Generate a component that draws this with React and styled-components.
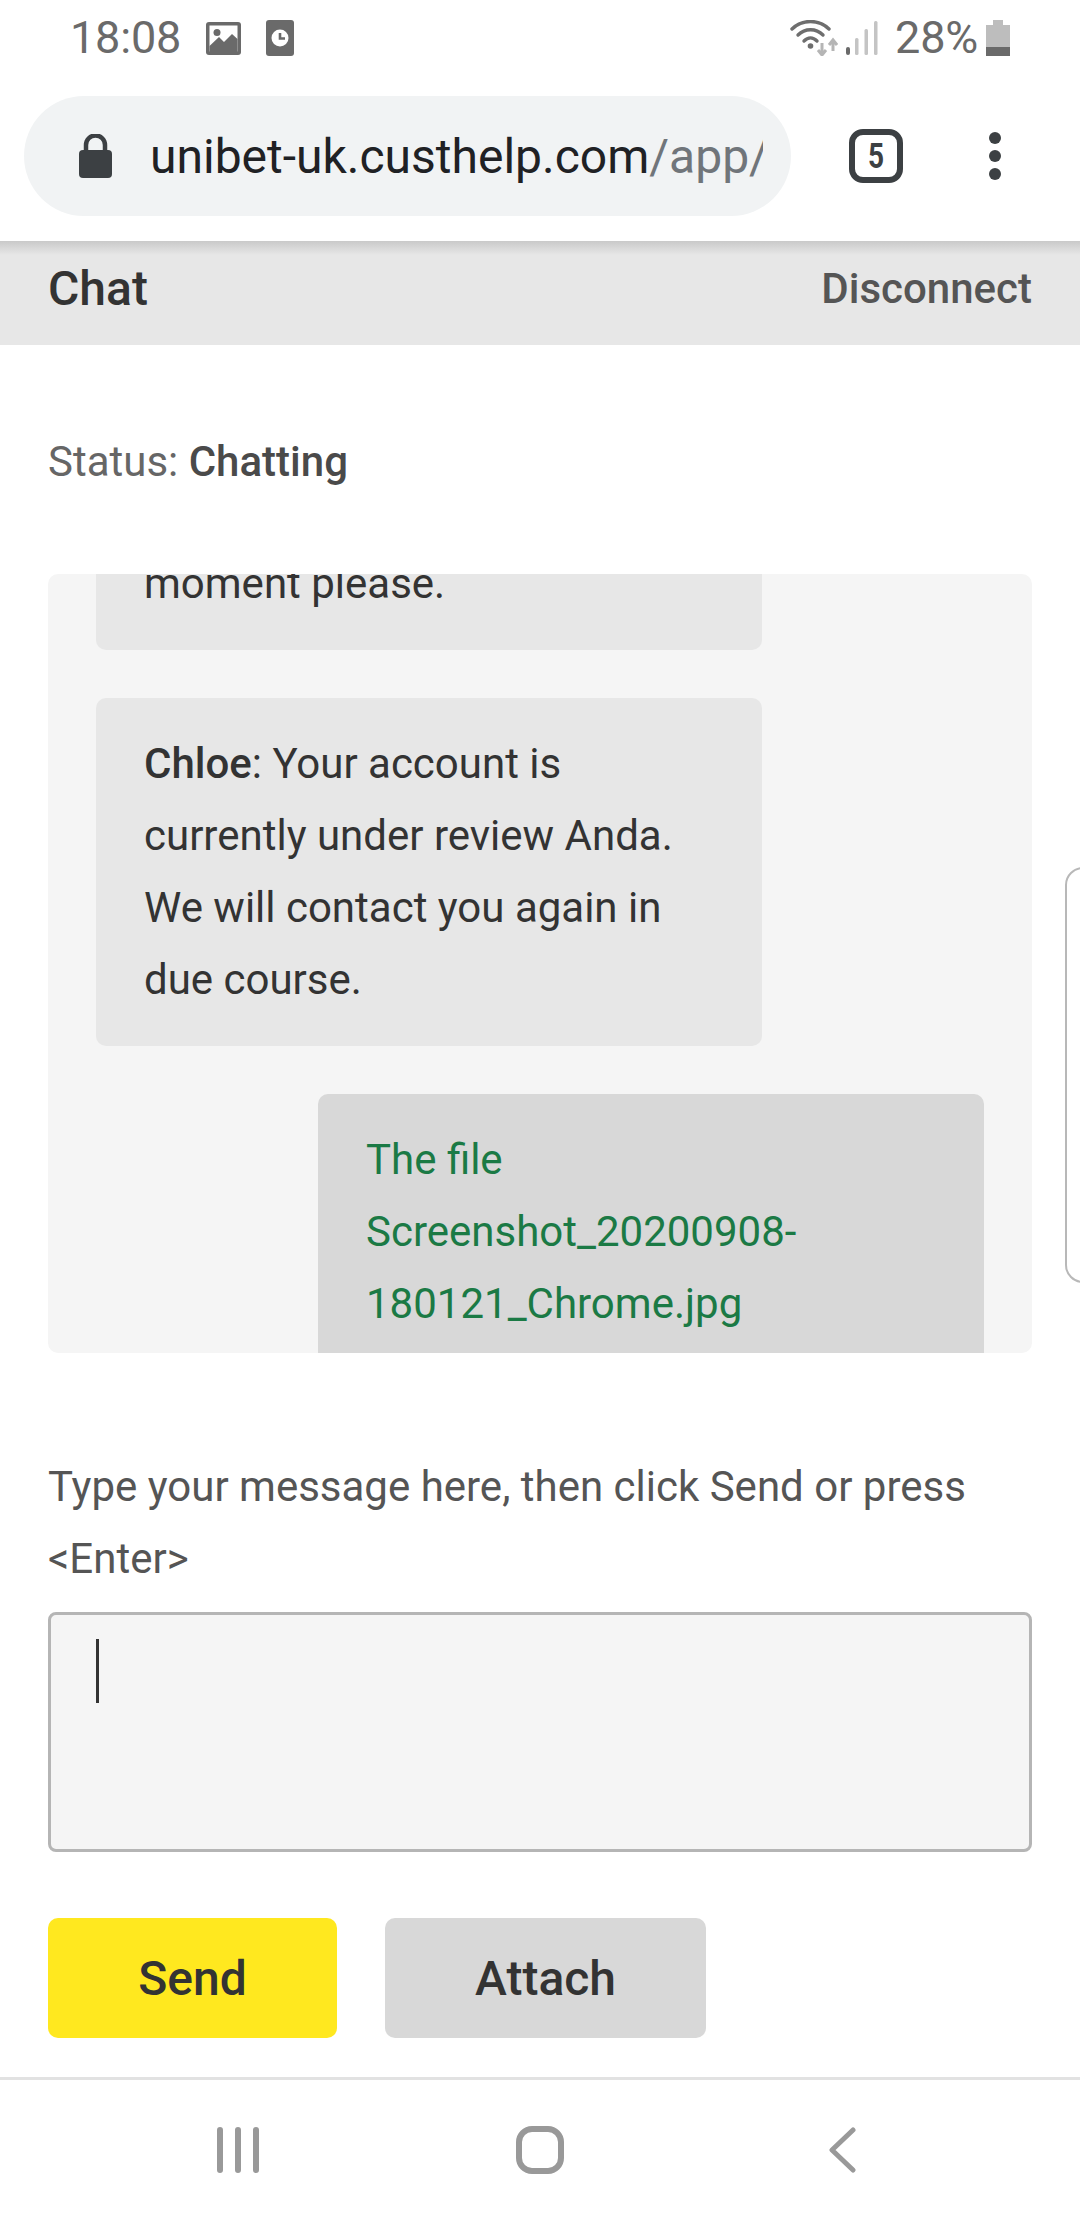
import React from "react";
import styled, { createGlobalStyle } from "styled-components";

const Global = createGlobalStyle`
  html, body { margin: 0; padding: 0; background: #fff; }
  body { font-family: Roboto, "Liberation Sans", sans-serif; }
  * { box-sizing: border-box; }
`;
const Page = styled.div`
  position: relative; width: 1080px; height: 2220px; background: #fff; overflow: hidden;
  display: flex; flex-direction: column;
`;
const StatusBar = styled.div`
  height: 76px; flex: none; display: flex; align-items: center; justify-content: space-between;
  padding: 0 70px 0 70px; color: #6a6a6a; font-size: 45px; letter-spacing: -0.2px;
`;
const StatusGroup = styled.div`display: flex; align-items: center; gap: ${p => p.$gap || 0}px;`;
const Clock = styled.span`margin-right: 25px; line-height: 76px;`;
const Percent = styled.span`margin: 0 8px 0 17px; line-height: 76px; font-size: 45px;`;
const SignalSlot = styled.div`margin-left: 8px; display: flex;`;
const Toolbar = styled.div`
  height: 165px; flex: none; display: flex; align-items: flex-start; padding: 20px 0 0 24px; background: #fff;
  position: relative; z-index: 1;
`;
const UrlPill = styled.div`
  width: 767px; height: 120px; border-radius: 60px; background: #f1f3f4;
  display: flex; align-items: center; padding: 0 28px 0 55px; overflow: hidden;
`;
const UrlText = styled.div`
  margin-left: 38px; font-size: 48px; color: #202124; white-space: nowrap; overflow: hidden; flex: 1; letter-spacing: 0;
  span { color: #70757a; }
`;
const TabCount = styled.div`
  margin: 33px 0 0 58px; width: 54px; height: 54px; border: 6px solid #3c4043; border-radius: 14px;
  display: flex; align-items: center; justify-content: center; font-size: 35px; font-weight: 700; color: #3c4043;
  span { display: block; transform: scaleX(0.8); }
`;
const MenuDots = styled.div`
  margin: 36px 0 0 86px; width: 12px; display: flex; flex-direction: column; gap: 6px;
  i { display: block; width: 12px; height: 12px; border-radius: 50%; background: #3c4043; }
`;
const Header = styled.div`
  height: 104px; flex: none; background: #e7e7e7; display: flex; align-items: center; justify-content: space-between;
  padding: 0 48px 10px; position: relative;
  &::before { content: ""; position: absolute; left: 0; right: 0; top: 0; height: 14px; background: linear-gradient(#c9c9c9, #e7e7e7); }
`;
const Title = styled.div`font-size: 48px; font-weight: 500; color: #333;`;
const Disconnect = styled.div`font-size: 42px; font-weight: 500; color: #555;`;
const Status = styled.div`
  margin: 88px 48px 0; height: 58px; line-height: 58px; font-size: 42px; color: #666; flex: none;
  b { font-weight: 500; color: #4a4a4a; }
`;
const ChatLog = styled.div`
  margin: 83px 48px 0; height: 779px; flex: none; background: #f5f5f5; border-radius: 10px; overflow: hidden;
  padding: 0 48px; display: flex; flex-direction: column; gap: 48px;
`;
const Bubble = styled.div`
  width: 666px; flex: none; padding: 30px 48px; border-radius: 10px; font-size: 42px; line-height: 72px;
  background: ${p => p.$own ? "#d8d8d8" : "#e7e7e7"};
  color: ${p => p.$own ? "#1b7a45" : "#333"};
  align-self: ${p => p.$own ? "flex-end" : "flex-start"};
  margin-top: ${p => p.$offset || 0}px;
  b { font-weight: 500; }
`;
const Prompt = styled.div`
  margin: 98px 48px 0; font-size: 42px; line-height: 72px; color: #555; flex: none;
`;
const MessageBox = styled.div`
  margin: 17px 48px 0; height: 240px; flex: none; background: #f5f5f5; border: 3px solid #b5b5b5; border-radius: 8px;
  padding: 24px 45px;
`;
const Caret = styled.div`width: 3px; height: 64px; background: #333;`;
const Actions = styled.div`margin: 66px 48px 0; display: flex; gap: 48px; flex: none;`;
const Button = styled.div`
  height: 120px; width: ${p => p.$w}px; border-radius: 10px; background: ${p => p.$bg};
  display: flex; align-items: center; justify-content: center; font-size: 48px; font-weight: 500; color: #333;
`;
const NavBar = styled.div`
  margin-top: 39px; flex: 1; border-top: 3px solid #e2e2e2; display: flex; align-items: center; justify-content: center;
`;
const NavSlot = styled.div`width: 302px; display: flex; justify-content: center;`;
const EdgeHandle = styled.div`
  position: absolute; left: 1065px; top: 867px; width: 40px; height: 416px;
  border: 2px solid #b8b8b8; border-radius: 18px; background: #fff;
`;

const ImageIcon = () => (
  <svg width="35" height="33" viewBox="0 0 35 33">
    <rect width="35" height="33" rx="3" fill="#6a6a6a" />
    <rect x="3.5" y="3.5" width="28" height="26" fill="#fff" />
    <circle cx="11" cy="10.5" r="3.5" fill="#6a6a6a" />
    <path d="M3.5 24 L13 15 L18 20 L26 12 L31.5 17 V30 H3.5Z" fill="#6a6a6a" />
  </svg>
);
const ClockIcon = () => (
  <svg width="28" height="36" viewBox="0 0 28 36">
    <rect width="28" height="36" rx="3" fill="#6a6a6a" />
    <circle cx="14" cy="18" r="8.5" fill="#fff" />
    <path d="M14 13 V18.5 H19" fill="none" stroke="#6a6a6a" strokeWidth="2.6" />
  </svg>
);
const WifiIcon = () => (
  <svg width="48" height="36" viewBox="0 0 48 36">
    <g fill="none" stroke="#6e6e6e" strokeWidth="3.4" strokeLinecap="round">
      <path d="M2 9 C12 -1 29 -1 39 9" />
      <path d="M8 15 C15 8 26 8 33 15" />
      <path d="M14 21 C18 17 23 17 27 21" />
    </g>
    <circle cx="20.5" cy="26" r="2.8" fill="#6e6e6e" />
    <path d="M32 23 V34 M28 30 L32 35 L36 30" fill="none" stroke="#b5b5b5" strokeWidth="3" />
    <path d="M43 31 V21 M39 25 L43 20 L47 25" fill="none" stroke="#b5b5b5" strokeWidth="3" />
  </svg>
);
const SignalIcon = () => (
  <svg width="32" height="34" viewBox="0 0 32 34">
    <rect x="0" y="26" width="4" height="8" rx="2" fill="#6a6a6a" />
    <rect x="9" y="17" width="3.5" height="17" rx="1.5" fill="#c4c4c4" />
    <rect x="18.5" y="8" width="3.5" height="26" rx="1.5" fill="#c4c4c4" />
    <rect x="28" y="0" width="3.5" height="34" rx="1.5" fill="#c4c4c4" />
  </svg>
);
const BatteryIcon = () => (
  <svg width="24" height="36" viewBox="0 0 24 36">
    <path d="M7 0 H17 V5 H24 V27 H0 V5 H7Z" fill="#bdbdbd" />
    <rect y="27" width="24" height="9" fill="#6a6a6a" />
  </svg>
);
const LockIcon = () => (
  <svg width="33" height="44" viewBox="0 0 33 44">
    <path d="M7 18 V11 a9.5 9.5 0 0 1 19 0 V18" fill="none" stroke="#3c4043" strokeWidth="4.5" />
    <rect y="16" width="33" height="28" rx="4" fill="#3c4043" />
  </svg>
);
const RecentsIcon = () => (
  <svg width="42" height="46" viewBox="0 0 42 46">
    <g stroke="#999" strokeWidth="6" strokeLinecap="round">
      <path d="M3 3 V43 M21 3 V43 M39 3 V43" />
    </g>
  </svg>
);
const HomeIcon = () => (
  <svg width="48" height="48" viewBox="0 0 48 48">
    <rect x="3" y="3" width="42" height="42" rx="13" fill="none" stroke="#999" strokeWidth="6" />
  </svg>
);
const BackIcon = () => (
  <svg width="28" height="46" viewBox="0 0 28 46">
    <path d="M25 3 L4 23 L25 43" fill="none" stroke="#999" strokeWidth="5" strokeLinecap="round" strokeLinejoin="round" />
  </svg>
);

export default function App() {
  return (
    <Page>
      <Global />
      <StatusBar>
        <StatusGroup>
          <Clock>18:08</Clock>
          <StatusGroup $gap={25}><ImageIcon /><ClockIcon /></StatusGroup>
        </StatusGroup>
        <StatusGroup>
          <WifiIcon /><SignalSlot><SignalIcon /></SignalSlot>
          <Percent>28%</Percent>
          <BatteryIcon />
        </StatusGroup>
      </StatusBar>
      <Toolbar>
        <UrlPill>
          <LockIcon />
          <UrlText>unibet-uk.custhelp.com<span>/app/</span></UrlText>
        </UrlPill>
        <TabCount><span>5</span></TabCount>
        <MenuDots><i /><i /><i /></MenuDots>
      </Toolbar>
      <Header>
        <Title>Chat</Title>
        <Disconnect>Disconnect</Disconnect>
      </Header>
      <Status>Status: <b>Chatting</b></Status>
      <ChatLog>
        <Bubble $offset={-56}>moment please.</Bubble>
        <Bubble><b>Chloe</b>: Your account is currently under review Anda. We will contact you again in due course.</Bubble>
        <Bubble $own>The file<br />Screenshot_20200908-<br />180121_Chrome.jpg</Bubble>
      </ChatLog>
      <Prompt>Type your message here, then click Send or press &lt;Enter&gt;</Prompt>
      <MessageBox><Caret /></MessageBox>
      <Actions>
        <Button $w={289} $bg="#ffe81f">Send</Button>
        <Button $w={321} $bg="#d8d8d8">Attach</Button>
      </Actions>
      <NavBar>
        <NavSlot><RecentsIcon /></NavSlot>
        <NavSlot><HomeIcon /></NavSlot>
        <NavSlot><BackIcon /></NavSlot>
      </NavBar>
      <EdgeHandle />
    </Page>
  );
}
